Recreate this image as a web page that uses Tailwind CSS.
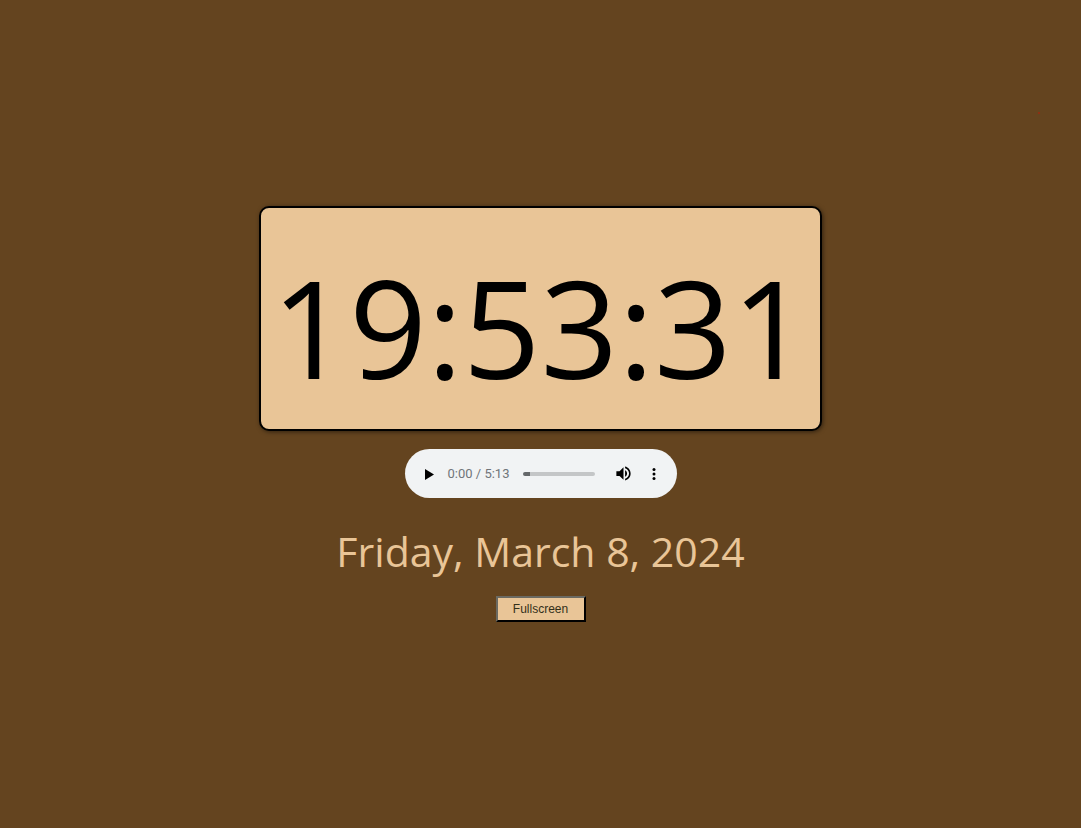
<!DOCTYPE html>
<html lang="en">
<head>
<meta charset="utf-8">
<meta name="viewport" content="width=device-width, initial-scale=1">
<title>Clock</title>
<script src="https://cdn.jsdelivr.net/npm/@tailwindcss/browser@4"></script>
</head>
<body class="relative flex min-h-screen flex-col items-center justify-center bg-[#64441f] font-['Segoe_UI','Open_Sans',sans-serif]">
<span class="absolute right-[41px] top-28 size-[2px] rounded-full bg-[#9a2a10]"></span>
<main class="flex flex-col items-center">
  <time class="block rounded-[10px] border-2 border-black bg-[#e9c597] px-[10px] pt-[22px] pb-[6px] text-[136px] leading-[193px] text-black shadow-[1px_1px_4px_rgba(0,0,0,0.5)]">19:53:31</time>
  <div role="group" aria-label="Audio player" class="mt-[18px] flex h-[49px] w-[272px] items-center rounded-full bg-[#f1f3f4] pl-[17px] pr-[14px]">
    <button type="button" aria-label="Play" class="flex size-[14px] items-center justify-center">
      <svg viewBox="0 0 14 14" class="size-[14px]" fill="#000"><path d="M3 2v11l9-5.500z"/></svg>
    </button>
    <span class="ml-3 w-[75px] pt-px font-[Roboto,sans-serif] text-[13px] leading-4 whitespace-nowrap text-[#70757a]">0:00 / 5:13</span>
    <input type="range" aria-label="Seek" min="0" max="313" value="0" class="h-1 w-[72px] appearance-none rounded-full bg-linear-to-r from-[#65686a] from-10% to-[#c4c6c7] to-10% [&::-webkit-slider-thumb]:size-0 [&::-webkit-slider-thumb]:appearance-none">
    <button type="button" aria-label="Mute" class="ml-[20px] flex size-[18px] items-center justify-center">
      <svg viewBox="0 0 24 24" class="size-[19px] shrink-0" fill="#000"><path d="M3 9v6h4l5 5V4L7 9zm13.500 3c0-1.770-1.020-3.290-2.500-4.030v8.050c1.480-.730 2.500-2.250 2.500-4.020M14 3.230v2.060c2.890.860 5 3.540 5 6.710s-2.110 5.850-5 6.710v2.060c4.010-.910 7-4.490 7-8.770s-2.990-7.860-7-8.770"/></svg>
    </button>
    <button type="button" aria-label="More options" class="ml-3 flex size-[18px] items-center justify-center">
      <svg viewBox="0 0 24 24" class="size-[18px]" fill="#000"><circle cx="12" cy="6" r="2"/><circle cx="12" cy="12" r="2"/><circle cx="12" cy="18" r="2"/></svg>
    </button>
  </div>
  <p class="mt-6 text-[41px] leading-[58px] text-[#e9c597]">Friday, March 8, 2024</p>
  <button type="button" class="mt-4 h-[26px] w-[90px] border-2 border-t-[#6b6a62] border-l-[#6b6a62] border-r-black border-b-black bg-[#e9c597] font-['Liberation_Sans',sans-serif] text-[12px] text-[#33301a]">Fullscreen</button>
</main>
</body>
</html>
